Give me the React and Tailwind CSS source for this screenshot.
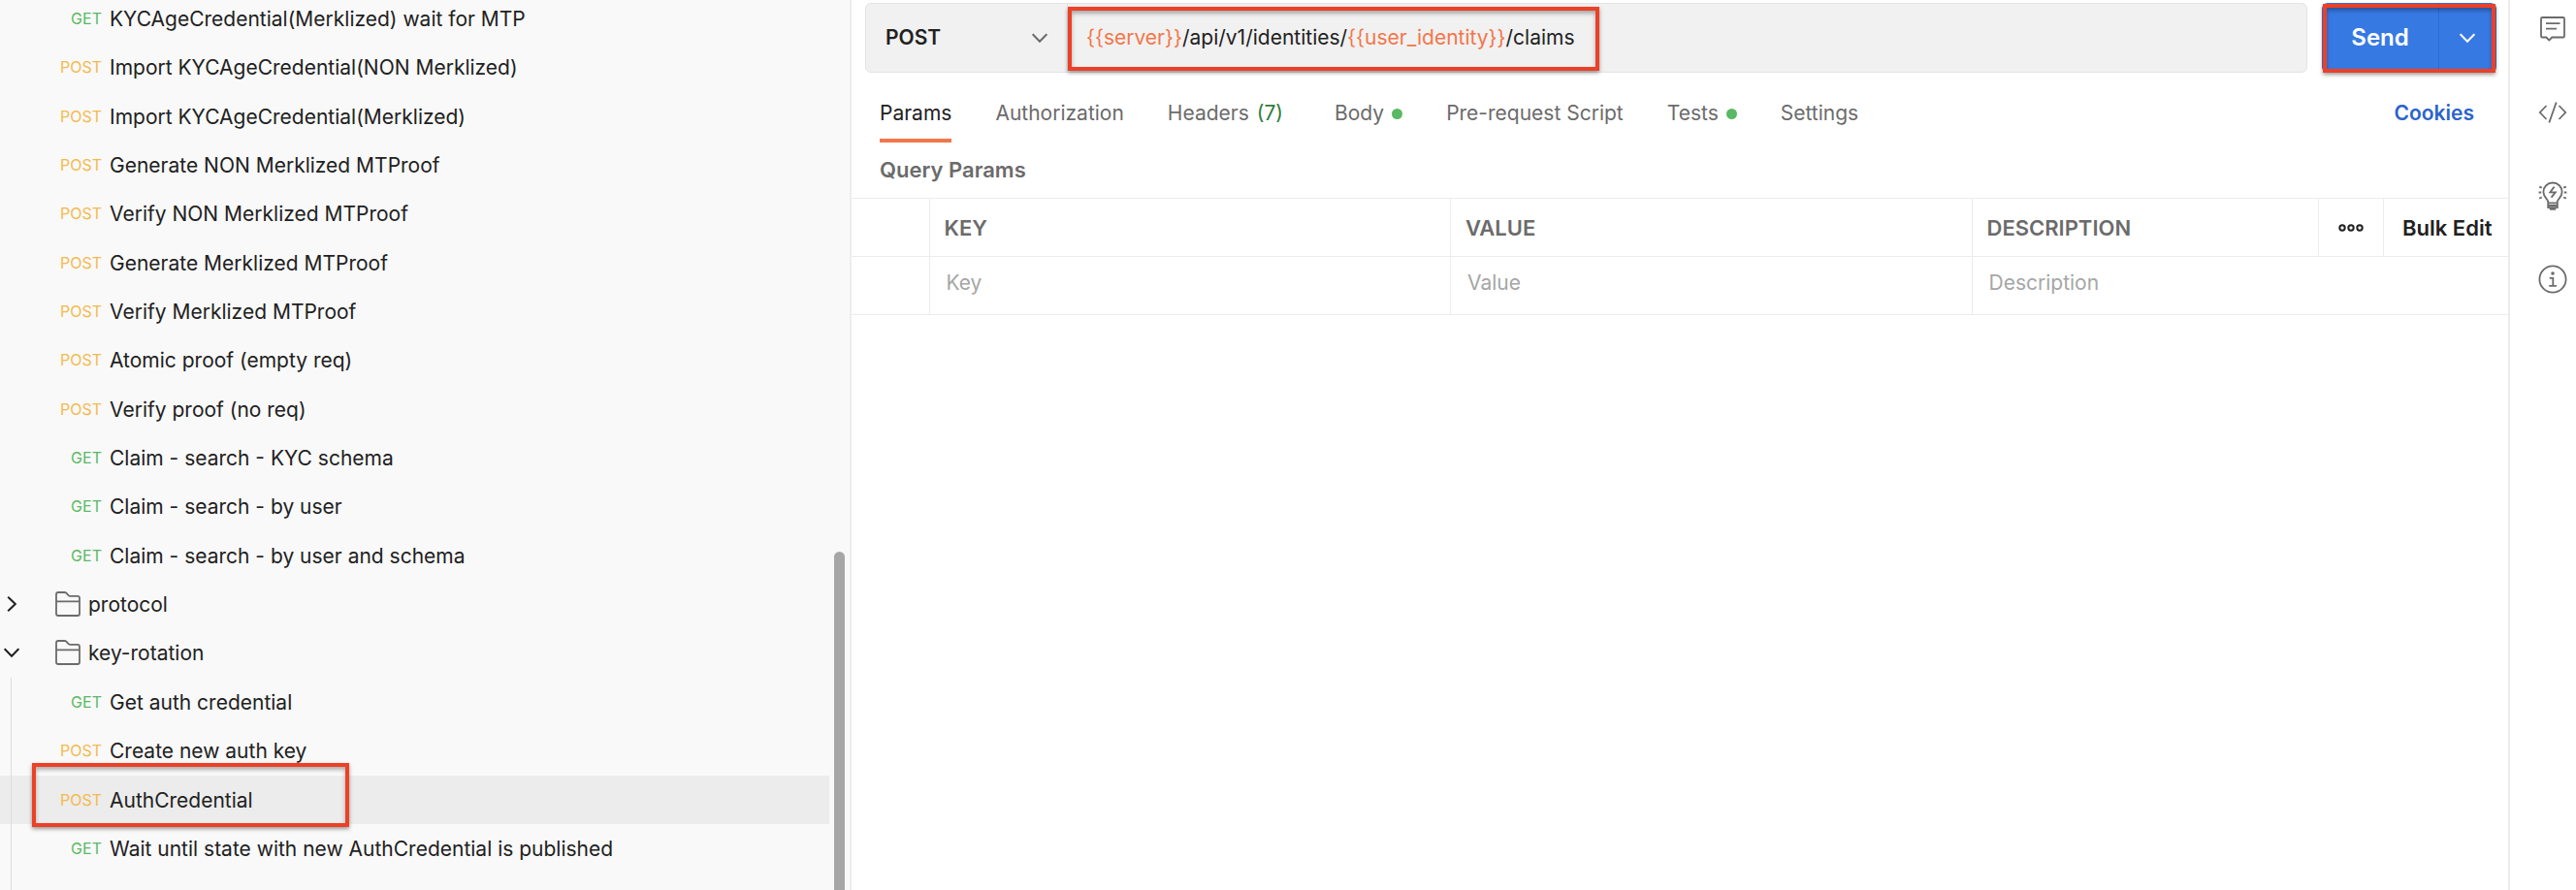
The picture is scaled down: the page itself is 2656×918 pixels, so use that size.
import React, { useState } from "react";

const requests = [
  ["GET", "KYCAgeCredential(Merklized) wait for MTP"],
  ["POST", "Import KYCAgeCredential(NON Merklized)"],
  ["POST", "Import KYCAgeCredential(Merklized)"],
  ["POST", "Generate NON Merklized MTProof"],
  ["POST", "Verify NON Merklized MTProof"],
  ["POST", "Generate Merklized MTProof"],
  ["POST", "Verify Merklized MTProof"],
  ["POST", "Atomic proof (empty req)"],
  ["POST", "Verify proof (no req)"],
  ["GET", "Claim - search - KYC schema"],
  ["GET", "Claim - search - by user"],
  ["GET", "Claim - search - by user and schema"],
];

const rotationRequests = [
  ["GET", "Get auth credential"],
  ["POST", "Create new auth key"],
  ["POST", "AuthCredential"],
  ["GET", "Wait until state with new AuthCredential is published"],
];

const tabs = [
  { name: "Params", active: true },
  { name: "Authorization" },
  { name: "Headers", count: 7 },
  { name: "Body", dot: true },
  { name: "Pre-request Script" },
  { name: "Tests", dot: true },
  { name: "Settings" },
];

function Chevron({ className, right }) {
  return (
    <svg viewBox="0 0 16 16" className={className} fill="none" stroke="currentColor" strokeWidth="2" aria-hidden="true">
      <path d={right ? "M4.2 .7 11.8 8 4.2 15.3" : "M.7 4.2 8 11.8 15.3 4.2"} />
    </svg>
  );
}

function FolderIcon() {
  return (
    <svg viewBox="0 0 26 26" className="size-[26px] text-[#6b6b6b]" fill="none" stroke="currentColor" strokeWidth="1.8" aria-hidden="true">
      <path d="M1 23V3Q1 1 3 1H9.6Q10.6 1 11.3 1.7L13.6 4.2Q14.3 4.9 15.3 4.9H23Q25 4.9 25 6.9V23Q25 25 23 25H3Q1 25 1 23ZM1 10.4H25" />
    </svg>
  );
}

function Highlight({ className }) {
  return (
    <div
      aria-hidden="true"
      className={`pointer-events-none absolute z-10 border-4 border-[#ec4027] shadow-[0_2px_4px_rgba(0,0,0,0.4),inset_0_3px_4px_rgba(0,0,0,0.3)] ${className}`}
    />
  );
}

function RequestRow({ method, name, selected }) {
  return (
    <li className="relative nth-[3n+2]:mb-px">
      <button
        type="button"
        className={`flex h-[50px] w-full items-center gap-2 text-left ${selected ? "bg-[#ececec]" : ""}`}
      >
        <span className={`w-[105px] text-right text-base ${method === "GET" ? "text-[#59b964]" : "text-[#f5b94d]"}`}>
          {method}
        </span>
        <span className="pt-0.5 whitespace-nowrap">{name}</span>
      </button>
      {selected && <Highlight className="-top-[13px] left-[33px] h-[66px] w-[327px]" />}
    </li>
  );
}

function FolderRow({ name, open }) {
  return (
    <li className="nth-[3n+2]:mb-px">
      <button type="button" aria-expanded={open} className="flex h-[50px] w-full items-center text-left">
        <Chevron right={!open} className="mr-[37px] ml-1 size-4 text-[#212121]" />
        <FolderIcon />
        <span className="ml-2 pt-0.5">{name}</span>
      </button>
    </li>
  );
}

function Sidebar() {
  return (
    <aside className="flex w-[878px] shrink-0 border-r-2 border-[#ededed] bg-[#f9f9f9]">
      <div className="-mt-[6px] flex flex-1 flex-col">
        <ul>
          {requests.map(([method, name]) => (
            <RequestRow key={name} method={method} name={name} />
          ))}
          <FolderRow name="protocol" open={false} />
          <FolderRow name="key-rotation" open />
        </ul>
        <div className="relative flex-1">
          <ul>
            {rotationRequests.map(([method, name]) => (
              <RequestRow key={name} method={method} name={name} selected={name === "AuthCredential"} />
            ))}
          </ul>
          <div aria-hidden="true" className="absolute inset-y-0 left-[11px] w-px bg-[#dcdcdc]" />
        </div>
      </div>
      <div className="flex w-[21px] justify-center pt-[569px]">
        <div className="w-[11px] rounded-t-full bg-[#a6a6a6]" />
      </div>
    </aside>
  );
}

function RequestBar() {
  const [url, setUrl] = useState("{{server}}/api/v1/identities/{{user_identity}}/claims");
  return (
    <div className="flex gap-[15px] pt-[3px] pr-3 pl-[14px]">
      <div className="flex h-[72px] flex-1 rounded-md border border-[#e4e4e4] bg-[#f1f1f1]">
        <div className="grid w-[208px] items-center border-r border-[#e4e4e4]">
          <select
            aria-label="HTTP method"
            defaultValue="POST"
            className="col-start-1 row-start-1 h-full appearance-none bg-transparent pl-5 font-semibold outline-none"
          >
            <option>POST</option>
            <option>GET</option>
          </select>
          <Chevron className="pointer-events-none col-start-1 row-start-1 mr-5 size-4 justify-self-end text-[#6b6b6b]" />
        </div>
        <div className="relative grid flex-1 items-center px-[19px]">
          <div aria-hidden="true" className="col-start-1 row-start-1 whitespace-pre">
            {url.split(/(\{\{.*?\}\})/).map((part, i) => (
              <span key={i} className={part.startsWith("{{") ? "text-[#f2774a]" : ""}>
                {part}
              </span>
            ))}
          </div>
          <input
            aria-label="Request URL"
            value={url}
            onChange={(e) => setUrl(e.target.value)}
            className="col-start-1 row-start-1 h-full bg-transparent text-transparent caret-[#212121] outline-none"
          />
          <Highlight className="top-[3px] left-0 h-[66px] w-[548px]" />
        </div>
      </div>
      <div className="relative flex h-[72px] rounded-md bg-[#3779e3] text-white">
        <button type="button" className="w-[121px] border-r border-[#2f6bd0] text-center text-2xl font-semibold">
          Send
        </button>
        <button type="button" aria-label="Send options" className="flex w-[59px] items-center justify-center pr-0.5">
          <Chevron className="size-4" />
        </button>
        <Highlight className="inset-x-px top-px bottom-0" />
      </div>
    </div>
  );
}

function Tabs() {
  return (
    <div className="flex items-center justify-between pt-4 pr-[35px] pl-[29px]">
      <div role="tablist" className="flex gap-[45px]">
        {tabs.map(({ name, active, count, dot }) => (
          <button
            key={name}
            type="button"
            role="tab"
            aria-selected={Boolean(active)}
            className={`flex h-14 items-center gap-2 border-b-4 ${
              active ? "border-[#f2774a] text-[#212121]" : "border-transparent text-[#6b6b6b]"
            }`}
          >
            {name}
            {count && <span className="pr-2 text-[#2f7d37]">({count})</span>}
            {dot && <span className="size-[11px] rounded-full bg-[#59b964]" />}
          </button>
        ))}
      </div>
      <a href="#cookies" className="pb-1 font-semibold text-[#2b63cc]">
        Cookies
      </a>
    </div>
  );
}

function ParamsTable() {
  const line = "border-[#ececec]";
  const field = "w-full pb-1.5 pl-[17px] outline-none placeholder:text-[#a6a6a6]";
  return (
    <table className={`w-full table-fixed border-collapse border-y text-left ${line}`}>
      <colgroup>
        <col className="w-[80px]" />
        <col />
        <col />
        <col className="w-[357px]" />
        <col className="w-[67px]" />
        <col className="w-[129px]" />
      </colgroup>
      <thead className="text-[22px] text-[#6b6b6b]">
        <tr className={`h-[60px] border-b ${line}`}>
          <td className={`border-r ${line}`} />
          <th className={`border-r pl-[15px] font-semibold ${line}`}>KEY</th>
          <th className={`border-r pl-[15px] font-semibold ${line}`}>VALUE</th>
          <th className={`border-r pl-[15px] font-semibold ${line}`}>DESCRIPTION</th>
          <td className={`border-r ${line}`}>
            <button type="button" aria-label="More options" className="flex w-full justify-center text-[#212121]">
              <svg viewBox="0 0 26 8" className="h-2 w-[26px]" fill="none" stroke="currentColor" strokeWidth="2" aria-hidden="true">
                <circle cx="4" cy="4" r="2.7" />
                <circle cx="13" cy="4" r="2.7" />
                <circle cx="22" cy="4" r="2.7" />
              </svg>
            </button>
          </td>
          <td>
            <button type="button" className="w-full pl-[3px] text-center font-semibold whitespace-nowrap text-[#212121]">
              Bulk Edit
            </button>
          </td>
        </tr>
      </thead>
      <tbody>
        <tr className="h-[60px]">
          <td className={`border-r ${line}`} />
          <td className={`border-r ${line}`}>
            <input aria-label="Key" placeholder="Key" className={field} />
          </td>
          <td className={`border-r ${line}`}>
            <input aria-label="Value" placeholder="Value" className={field} />
          </td>
          <td colSpan={3}>
            <input aria-label="Description" placeholder="Description" className={field} />
          </td>
        </tr>
      </tbody>
    </table>
  );
}

function RailButton({ label, children }) {
  return (
    <button type="button" aria-label={label} className="text-[#6b6b6b]">
      <svg viewBox="0 0 30 30" className="size-[30px]" fill="none" stroke="currentColor" strokeWidth="1.8" aria-hidden="true">
        {children}
      </svg>
    </button>
  );
}

function Rail() {
  return (
    <aside className="flex w-[70px] shrink-0 flex-col items-center gap-14 border-l-2 border-[#ececec] bg-white pt-[15px] pl-[19px]">
      <RailButton label="Comments">
        <path d="M4.3 3H25.7Q27 3 27 4.3V22.2Q27 23.5 25.7 23.5H14.3L11.3 26.5 8.3 23.5H4.3Q3 23.5 3 22.2V4.3Q3 3 4.3 3ZM8 9.2H22.5M8 14.7H19" />
      </RailButton>
      <RailButton label="Code">
        <path d="M8.5 8 1.8 15 8.5 22M21.5 8 28.2 15 21.5 22M18.7 4.5 11.3 25.5" />
      </RailButton>
      <RailButton label="Related requests">
        <path d="M10.2 22.3V20.8C10.2 18.6 5.4 16.4 5.4 10.9A9.6 9.4 0 0 1 24.6 10.9C24.6 16.4 19.8 18.6 19.8 20.8V27.2H10.2V22.3H19.8M10.2 25H19.8" />
        <path d="M11.8 28.8H18.2" />
        <path d="M16.6 5.6 12.3 11.3H17.8L13.5 16.6" />
        <path d="M.6 11.5H3.2M1.2 5.6 3.8 6.6M1.2 17.6 3.8 16.5M29.4 11.5H26.8M28.8 5.6 26.2 6.6M28.8 17.6 26.2 16.5" />
      </RailButton>
      <RailButton label="Info">
        <circle cx="15" cy="15" r="13.6" />
        <circle cx="15" cy="9" r="1.8" fill="currentColor" stroke="none" />
        <path d="M11.7 13.9H15.3V21.8M11.2 21.8H18.9" />
      </RailButton>
    </aside>
  );
}

export default function App() {
  return (
    <div className="flex min-h-screen overflow-hidden bg-white font-['Inter',sans-serif] text-[21px] leading-8 text-[#212121]">
      <Sidebar />
      <main className="min-w-0 flex-1">
        <RequestBar />
        <Tabs />
        <h2 className="pt-3 pb-[13px] pl-[29px] text-[22px] font-semibold text-[#6b6b6b]">Query Params</h2>
        <ParamsTable />
      </main>
      <Rail />
    </div>
  );
}
